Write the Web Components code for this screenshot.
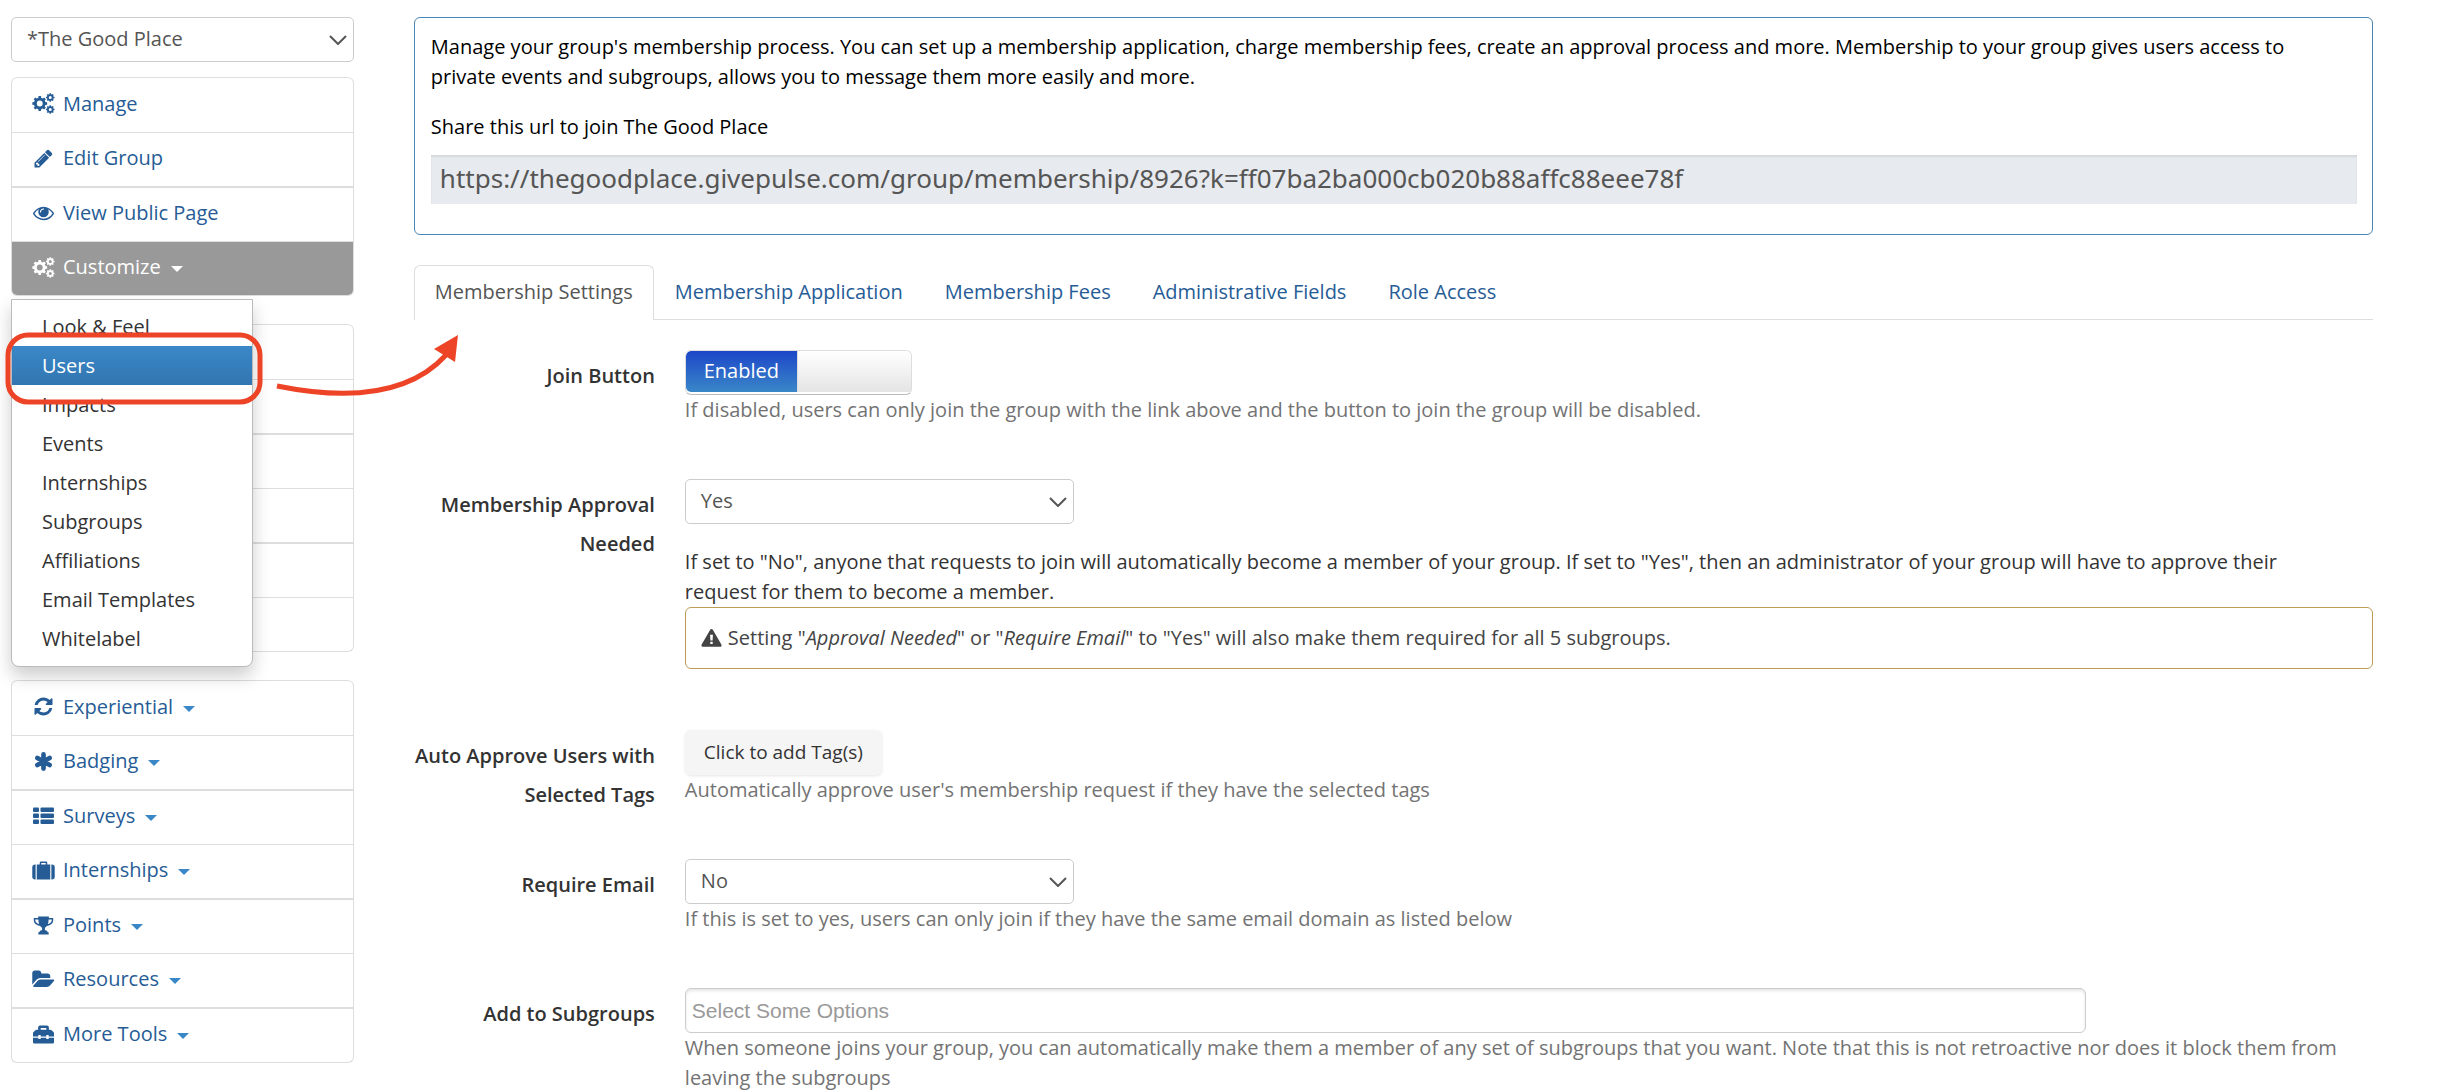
<!DOCTYPE html>
<html lang="en">
<head>
<meta charset="utf-8">
<meta name="viewport" content="width=device-width, initial-scale=1">
<title>Membership Settings</title>
<style>
    body {
        margin: 0;
        background: #fff;
        color: #333;
        font: 20px/30px "Open Sans", "Noto Sans", sans-serif;
    }
</style>
</head>
<body>
<group-admin>
    <drop-select slot="side" label="Group" options="*The Good Place"></drop-select>
    <side-group slot="side">
        <side-item icon="cogs">Manage</side-item>
        <side-item icon="pencil">Edit Group</side-item>
        <side-item icon="eye">View Public Page</side-item>
        <side-item icon="cogs" caret active>Customize
            <side-menu slot="menu" current="Users"
                items="Look &amp; Feel|Users|Impacts|Events|Internships|Subgroups|Affiliations|Email Templates|Whitelabel"></side-menu>
        </side-item>
    </side-group>
    <side-group slot="side">
        <side-item></side-item>
        <side-item></side-item>
        <side-item></side-item>
        <side-item></side-item>
        <side-item></side-item>
        <side-item></side-item>
    </side-group>
    <side-group slot="side">
        <side-item icon="refresh" caret>Experiential</side-item>
        <side-item icon="asterisk" caret>Badging</side-item>
        <side-item icon="list" caret>Surveys</side-item>
        <side-item icon="suitcase" caret>Internships</side-item>
        <side-item icon="trophy" caret>Points</side-item>
        <side-item icon="folder" caret>Resources</side-item>
        <side-item icon="toolbox" caret>More Tools</side-item>
    </side-group>

    <share-panel url="https://thegoodplace.givepulse.com/group/membership/8926?k=ff07ba2ba000cb020b88affc88eee78f">
        Manage your group's membership process. You can set up a membership application, charge membership fees, create an approval process and more. Membership to your group gives users access to private events and subgroups, allows you to message them more easily and more.
        <span slot="share">Share this url to join The Good Place</span>
    </share-panel>
    <tab-bar tabs="Membership Settings|Membership Application|Membership Fees|Administrative Fields|Role Access"></tab-bar>
    <settings-form></settings-form>
</group-admin>

<script>
    // Gear outline: toothed ring with a round hole, drawn with evenodd fill
    function gear(cx, cy, r, hole, teeth) {
        const points = [];
        for (let i = 0; i < teeth; i++) {
            const mid = (i / teeth) * Math.PI * 2;
            const step = Math.PI / teeth;
            [[-0.62, 0.78], [-0.42, 1], [0.42, 1], [0.62, 0.78]].forEach(([offset, scale]) => {
                const a = mid + offset * step;
                points.push(Math.round(cx + Math.cos(a) * r * scale) + ' ' + Math.round(cy + Math.sin(a) * r * scale));
            });
        }
        return `M${points.join('L')}Z M${cx - hole} ${cy}a${hole} ${hole} 0 1 0 ${hole * 2} 0a${hole} ${hole} 0 1 0 ${-hole * 2} 0Z`;
    }

    // All icons share a 1920x1792 box
    const ICONS = {
        cogs: `<path fill-rule="evenodd" d="${gear(640, 896, 640, 250, 8)} ${gear(1536, 384, 370, 130, 8)} ${gear(1536, 1408, 370, 130, 8)}"/>`,
        pencil: '<path transform="translate(64)" d="M491 1536l91-91-235-235-91 91v107h128v128h107zm523-928q0-22-22-22-10 0-17 7l-542 542q-7 7-7 17 0 22 22 22 10 0 17-7l542-542q7-7 7-17zm-54-192l416 416-832 832h-416v-416zm683 96q0 53-37 90l-166 166-416-416 166-165q36-38 90-38 53 0 91 38l235 234q37 39 37 91z"/>',
        eye: '<path transform="translate(64 -64)" d="M1664 960q-152-236-381-353 61 104 61 225 0 185-131.500 316.500t-316.500 131.500-316.500-131.500-131.500-316.500q0-121 61-225-229 117-381 353 133 205 333.500 326.500t434.500 121.500 434.500-121.500 333.500-326.500zm-720-384q0-20-14-34t-34-14q-125 0-214.500 89.500t-89.500 214.500q0 20 14 34t34 14 34-14 14-34q0-86 61-147t147-61q20 0 34-14t14-34zm848 384q0 34-20 69-140 230-376.500 368.500t-499.500 138.500-499.500-139-376.500-368q-20-35-20-69t20-69q140-229 376.500-368t499.500-139 499.500 139 376.500 368q20 35 20 69z"/>',
        refresh: '<path transform="translate(64)" d="M1639 1056q0 5-1 7-64 268-268 434.500t-478 166.500q-146 0-282.500-55t-243.500-157l-129 129q-19 19-45 19t-45-19-19-45v-448q0-26 19-45t45-19h448q26 0 45 19t19 45-19 45l-137 137q71 66 161 102t187 36q134 0 250-65t186-179q11-17 53-117 8-23 30-23h192q13 0 22.500 9.500t9.500 22.500zm25-800v448q0 26-19 45t-45 19h-448q-26 0-45-19t-19-45 19-45l138-138q-148-137-349-137-134 0-250 65t-186 179q-11 17-53 117-8 23-30 23h-199q-13 0-22.500-9.500t-9.500-22.500v-7q65-268 270-434.500t480-166.500q146 0 284 55.500t245 156.500l130-129q19-19 45-19t45 19 19 45z"/>',
        asterisk: '<path fill="none" stroke="currentColor" stroke-width="400" stroke-linecap="round" d="M960 290V1500M440 594L1480 1196M1480 594L440 1196"/>',
        list: '<g transform="translate(64)"><rect y="128" width="512" height="384" rx="90"/><rect x="640" y="128" width="1152" height="384" rx="90"/><rect y="640" width="512" height="384" rx="90"/><rect x="640" y="640" width="1152" height="384" rx="90"/><rect y="1152" width="512" height="384" rx="90"/><rect x="640" y="1152" width="1152" height="384" rx="90"/></g>',
        suitcase: '<path d="M288 384v1280h-60q-90 0-158-64t-68-158V606q0-94 68-158t158-64zM1632 384v1280h60q90 0 158-64t68-158V606q0-94-68-158t-158-64z"/><path fill-rule="evenodd" d="M384 384H640V220q0-92 92-92H1188q92 0 92 92V384H1536V1664H384ZM768 384H1152V256H768Z"/>',
        trophy: '<path fill-rule="evenodd" d="M500 128H1420V256H1790V470Q1790 640 1640 770T1250 930Q1170 1040 1080 1090V1290Q1290 1330 1330 1480H1400V1664H520V1480H590Q630 1330 840 1290V1090Q750 1040 670 930Q430 900 280 770T130 470V256H500ZM520 384H260V470Q260 560 345 645T590 775Q525 610 520 384ZM1400 384H1660V470Q1660 560 1575 645T1330 775Q1395 610 1400 384Z"/>',
        folder: '<path d="M1879 952q0 31-31 66l-336 396q-43 51-120 86t-144 36h-1088q-34 0-60-13t-27-43q0-31 31-66l336-396q43-51 120-86t144-36h1088q34 0 60 13t27 43zm-343-344v160h-832q-94 0-197 48t-164 119l-337 396-5 6v-985q0-92 66-158t158-66h320q92 0 158 66t66 158v32h544q92 0 158 66t66 158z"/>',
        toolbox: '<path fill-rule="evenodd" d="M64 1060V800Q64 740 110 690L270 530Q315 480 380 480H500V300Q500 128 672 128H1248Q1420 128 1420 300V480H1540Q1605 480 1650 530L1810 690Q1856 740 1856 800V1060H1400V940H1200V1060H720V940H520V1060ZM720 480H1200V340H720ZM64 1180H520V1290H720V1180H1200V1290H1400V1180H1856V1560Q1856 1664 1752 1664H168Q64 1664 64 1560Z"/>',
        warning: '<path fill-rule="evenodd" d="M960 64Q1040 64 1080 140L1860 1500Q1900 1580 1860 1640Q1820 1700 1740 1700H180Q100 1700 60 1640Q20 1580 60 1500L840 140Q880 64 960 64ZM830 600L860 1130H1060L1090 600ZM850 1250V1450H1070V1250Z"/>'
    };

    function icon(name) {
        return `<svg class="icon" viewBox="0 0 1920 1792" fill="currentColor" aria-hidden="true">${ICONS[name]}</svg>`;
    }

    class GroupAdmin extends HTMLElement {
        constructor() {
            super();
            this.attachShadow({ mode: 'open' }).innerHTML = `
                <style>
                    :host {
                        display: grid;
                        grid-template-columns: 7fr 40fr;
                        gap: 60px;
                        align-items: start;
                        padding: 17px 89px 0 11px;
                    }
                    nav { display: flex; flex-direction: column; gap: 28px; }
                    nav ::slotted(drop-select) { margin-bottom: -13px; }
                    main { display: flex; flex-direction: column; gap: 30px; min-width: 0; }
                </style>
                <nav><slot name="side"></slot></nav>
                <main><slot></slot></main>
            `;
        }
    }

    class DropSelect extends HTMLElement {
        constructor() {
            super();
            this.attachShadow({ mode: 'open' });
            const options = this.getAttribute('options').split('|');
            this.shadowRoot.innerHTML = `
                <style>
                    :host { display: grid; align-items: center; }
                    select {
                        grid-area: 1 / 1;
                        appearance: none;
                        width: 100%;
                        height: 45px;
                        margin: 0;
                        padding: 0 36px 2px 15px;
                        border: 1px solid #ccc;
                        border-radius: 5px;
                        background: #fff;
                        color: #555;
                        font: inherit;
                    }
                    svg {
                        grid-area: 1 / 1;
                        justify-self: end;
                        width: 18px;
                        height: 10px;
                        margin-right: 7px;
                        pointer-events: none;
                    }
                </style>
                <select aria-label="${this.getAttribute('label')}">
                    ${options.map(o => `<option>${o}</option>`).join('')}
                </select>
                <svg viewBox="0 0 18 10" fill="none" stroke="#555" stroke-width="2" aria-hidden="true"><path d="M1 1l8 8 8-8"/></svg>
            `;
        }
    }

    class SideGroup extends HTMLElement {
        constructor() {
            super();
            this.attachShadow({ mode: 'open' }).innerHTML = `
                <style>
                    :host {
                        display: flex;
                        flex-direction: column;
                        border: 1px solid #ddd;
                        border-top: 0;
                        border-radius: 6px;
                    }
                    ::slotted(side-item) { height: 54px; border-top: 1px solid #ddd; }
                    ::slotted(side-item:nth-child(odd)) { height: 55px; border-top-width: 2px; }
                    ::slotted(side-item:first-child) { border-top-width: 1px; border-radius: 6px 6px 0 0; }
                    ::slotted(side-item:last-child) { border-bottom-left-radius: 5px; border-bottom-right-radius: 5px; }
                </style>
                <slot></slot>
            `;
        }
    }

    class SideItem extends HTMLElement {
        constructor() {
            super();
            this.attachShadow({ mode: 'open' });
            const name = this.getAttribute('icon');
            this.shadowRoot.innerHTML = `
                <style>
                    :host {
                        display: flex;
                        position: relative;
                        box-sizing: border-box;
                        color: #265c96;
                    }
                    :host([active]) { background: #999; color: #fff; }
                    a {
                        display: flex;
                        flex: 1;
                        align-items: center;
                        padding: 0 20px 3px;
                        color: inherit;
                        text-decoration: none;
                    }
                    .icon { width: 23px; height: 21px; margin-right: 8px; }
                    .caret {
                        margin: 4px 0 0 10px;
                        border: 6px solid transparent;
                        border-top-color: #3a87c8;
                        border-bottom: 0;
                    }
                    :host([active]) .caret { border-top-color: #fff; }
                </style>
                ${name ? `<a href="#">${icon(name)}<span><slot></slot></span>${this.hasAttribute('caret') ? '<i class="caret"></i>' : ''}</a>` : ''}
                <slot name="menu"></slot>
            `;
        }
    }

    // Open dropdown, with the callout ring and arrow on the current entry
    class SideMenu extends HTMLElement {
        constructor() {
            super();
            this.attachShadow({ mode: 'open' });
            const current = this.getAttribute('current');
            const items = this.getAttribute('items').split('|');
            this.shadowRoot.innerHTML = `
                <style>
                    :host {
                        position: absolute;
                        z-index: 5;
                        top: calc(100% + 4px);
                        left: -1px;
                        width: 240px;
                        color: #333;
                        background: #fff;
                        border: 1px solid #bbb;
                        border-radius: 0 0 8px 8px;
                        box-shadow: 0 9px 18px rgba(0, 0, 0, .2);
                    }
                    ul { margin: 0; padding: 7px 0 8px; list-style: none; }
                    li { position: relative; }
                    a {
                        display: block;
                        padding: 0 30px;
                        line-height: 39px;
                        color: inherit;
                        text-decoration: none;
                    }
                    .current a { background: linear-gradient(#3a87c8, #3276b1); color: #fff; }
                    svg {
                        position: absolute;
                        z-index: 1;
                        top: -14px;
                        left: -12px;
                        width: 470px;
                        height: 80px;
                        pointer-events: none;
                    }
                </style>
                <ul>
                    ${items.map(text => `
                        <li class="${text === current ? 'current' : ''}">
                            <a href="#">${text.replace('&', '&amp;')}</a>
                            ${text === current ? this.callout() : ''}
                        </li>`).join('')}
                </ul>
            `;
        }

        callout() {
            return `
                <svg viewBox="0 0 470 80" fill="none" stroke="#ed4427" stroke-width="5" aria-hidden="true">
                    <rect x="8" y="3" width="252" height="67" rx="20"/>
                    <path d="M277 54Q396 78 446 23"/>
                    <path d="M458 3L434 17L455 30Z" fill="#ed4427" stroke="none"/>
                </svg>`;
        }
    }

    class SharePanel extends HTMLElement {
        constructor() {
            super();
            this.attachShadow({ mode: 'open' }).innerHTML = `
                <style>
                    :host {
                        display: block;
                        padding: 14px 15px 30px 16px;
                        border: 1px solid #4a86b4;
                        border-radius: 6px;
                        color: #000;
                    }
                    p { margin: 0 0 20px; padding-right: 50px; }
                    label { display: block; margin-bottom: 13px; }
                    input {
                        display: block;
                        box-sizing: border-box;
                        width: 100%;
                        height: 49px;
                        padding: 0 9px 3px;
                        border: 0;
                        background: #e7eaee;
                        box-shadow: inset 0 2px 2px rgba(0, 0, 0, .08);
                        color: #555;
                        font: 26px "Noto Sans", sans-serif;
                    }
                </style>
                <p><slot></slot></p>
                <label for="url"><slot name="share"></slot></label>
                <input id="url" type="text" readonly value="${this.getAttribute('url')}">
            `;
        }
    }

    class TabBar extends HTMLElement {
        constructor() {
            super();
            this.attachShadow({ mode: 'open' });
            const tabs = this.getAttribute('tabs').split('|');
            this.shadowRoot.innerHTML = `
                <style>
                    :host { display: flex; border-bottom: 1px solid #ddd; }
                    a {
                        margin-bottom: -1px;
                        padding: 11px 20px 13px;
                        border: 1px solid transparent;
                        border-bottom: 0;
                        border-radius: 6px 6px 0 0;
                        color: #265c96;
                        text-decoration: none;
                    }
                    a[aria-current] { border-color: #ddd; background: #fff; color: #555; }
                </style>
                ${tabs.map((tab, i) => `<a href="#"${i === 0 ? ' aria-current="page"' : ''}>${tab}</a>`).join('')}
            `;
        }
    }

    class ToggleSwitch extends HTMLElement {
        constructor() {
            super();
            this.attachShadow({ mode: 'open' }).innerHTML = `
                <style>
                    :host { display: block; }
                    label {
                        display: flex;
                        position: relative;
                        box-sizing: border-box;
                        width: 227px;
                        height: 45px;
                        padding-bottom: 2px;
                        border: 1px solid #ddd;
                        border-bottom-color: #bbb;
                        border-radius: 6px;
                        overflow: hidden;
                    }
                    input { position: absolute; inset: 0; width: 100%; height: 100%; margin: 0; opacity: 0; }
                    span {
                        width: 111px;
                        line-height: 39px;
                        text-align: center;
                        color: #fff;
                        background: linear-gradient(#1c46c8, #3a87c8);
                        border-radius: 5px 0 0 5px;
                    }
                    i { flex: 1; background: linear-gradient(#fff, #e4e4e4); border-left: 1px solid #ddd; }
                </style>
                <label><input type="checkbox" aria-label="Join Button" checked><span><slot></slot></span><i></i></label>
            `;
        }
    }

    class FormRow extends HTMLElement {
        constructor() {
            super();
            this.attachShadow({ mode: 'open' }).innerHTML = `
                <style>
                    :host {
                        display: grid;
                        grid-template-columns: 241px minmax(0, 1fr);
                        column-gap: 30px;
                        align-items: start;
                    }
                    .label {
                        margin-bottom: -16px;
                        padding-top: 6px;
                        line-height: 39px;
                        font-weight: 600;
                        text-align: right;
                    }
                </style>
                <div class="label">${this.getAttribute('label')}</div>
                <div><slot></slot></div>
            `;
        }
    }

    class SettingsForm extends HTMLElement {
        constructor() {
            super();
            this.attachShadow({ mode: 'open' }).innerHTML = `
                <style>
                    :host { display: block; }
                    form { display: flex; flex-direction: column; gap: 54px; }
                    p { margin: 0; }
                    .help { color: #737373; }
                    .note { margin-top: 23px; padding-right: 50px; }
                    drop-select { width: 389px; }
                    .alert {
                        display: flex;
                        align-items: center;
                        gap: 6px;
                        margin-bottom: 7px;
                        padding: 15px;
                        border: 1px solid #bd9d58;
                        border-radius: 6px;
                        color: #444;
                    }
                    .icon { width: 21px; height: 20px; }
                    button {
                        display: block;
                        height: 45px;
                        padding: 0 19px 2px;
                        border: 0;
                        border-radius: 6px;
                        background: #f5f5f5;
                        box-shadow: 0 1px 3px rgba(0, 0, 0, .1);
                        color: #333;
                        font: inherit;
                        font-size: 19px;
                    }
                    input {
                        display: block;
                        box-sizing: border-box;
                        width: 83%;
                        height: 45px;
                        padding: 0 6px;
                        border: 1px solid #ccc;
                        border-radius: 6px;
                        box-shadow: inset 0 2px 3px rgba(0, 0, 0, .1);
                        font: 21px "Liberation Sans", sans-serif;
                    }
                    input::placeholder { color: #999; }
                </style>
                <form>
                    <form-row label="Join Button">
                        <toggle-switch>Enabled</toggle-switch>
                        <p class="help">If disabled, users can only join the group with the link above and the button to join the group will be disabled.</p>
                    </form-row>
                    <form-row label="Membership Approval Needed">
                        <drop-select label="Membership Approval Needed" options="Yes|No"></drop-select>
                        <p class="note">If set to "No", anyone that requests to join will automatically become a member of your group. If set to "Yes", then an administrator of your group will have to approve their request for them to become a member.</p>
                        <div class="alert">${icon('warning')}<span>Setting "<em>Approval Needed</em>" or "<em>Require Email</em>" to "Yes" will also make them required for all 5 subgroups.</span></div>
                    </form-row>
                    <form-row label="Auto Approve Users with Selected Tags">
                        <button type="button">Click to add Tag(s)</button>
                        <p class="help">Automatically approve user's membership request if they have the selected tags</p>
                    </form-row>
                    <form-row label="Require Email">
                        <drop-select label="Require Email" options="No|Yes"></drop-select>
                        <p class="help">If this is set to yes, users can only join if they have the same email domain as listed below</p>
                    </form-row>
                    <form-row label="Add to Subgroups">
                        <input type="text" aria-label="Add to Subgroups" placeholder="Select Some Options">
                        <p class="help">When someone joins your group, you can automatically make them a member of any set of subgroups that you want. Note that this is not retroactive nor does it block them from leaving the subgroups</p>
                    </form-row>
                </form>
            `;
        }
    }

    customElements.define('group-admin', GroupAdmin);
    customElements.define('drop-select', DropSelect);
    customElements.define('side-group', SideGroup);
    customElements.define('side-item', SideItem);
    customElements.define('side-menu', SideMenu);
    customElements.define('share-panel', SharePanel);
    customElements.define('tab-bar', TabBar);
    customElements.define('toggle-switch', ToggleSwitch);
    customElements.define('form-row', FormRow);
    customElements.define('settings-form', SettingsForm);
</script>
</body>
</html>
